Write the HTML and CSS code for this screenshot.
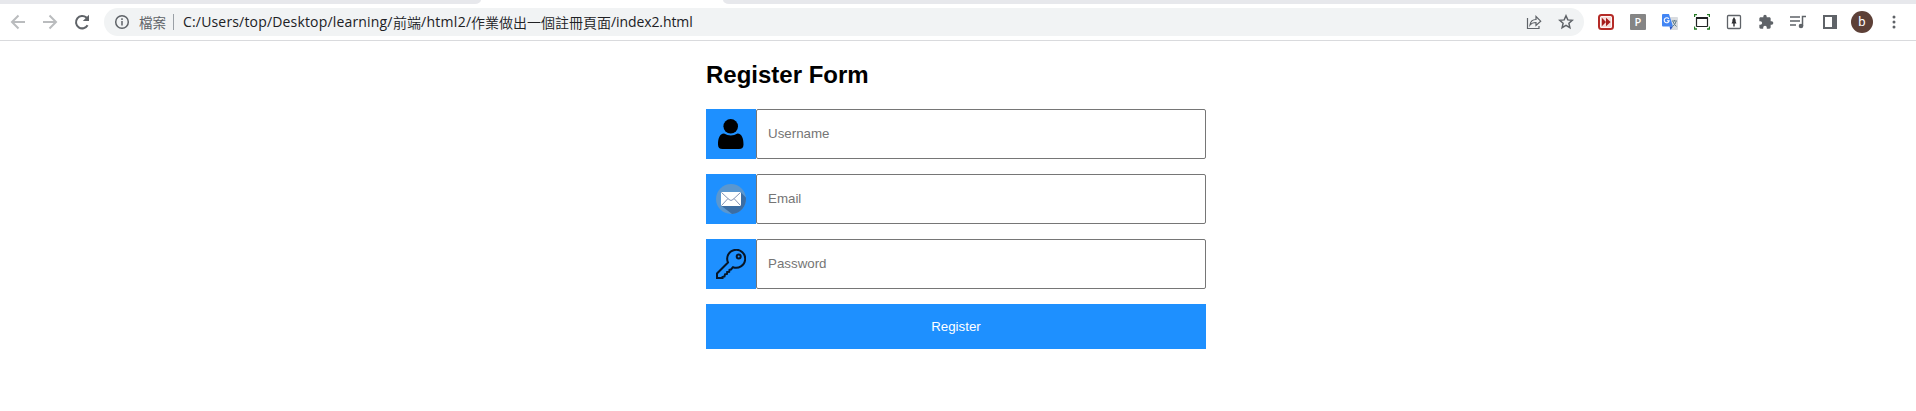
FILE: index.html
```html
<!DOCTYPE html>
<html lang="zh-Hant">
<head>
<meta charset="utf-8">
<title>Register Form</title>
<link rel="stylesheet" href="styles.css">
</head>
<body>
<div class="tabs"><div class="tab-left"></div><div class="tab-active"></div><div class="tab-right"></div></div>
<header class="toolbar">
  <nav class="nav">
    <svg class="dim" width="16" height="16" viewBox="0 0 16 16"><path d="M15 8H2.500M8.500 1.500 2 8l6.500 6.500"/></svg>
    <svg class="dim" width="16" height="16" viewBox="0 0 16 16"><path d="M1 8h12.500M7.500 1.500 14 8l-6.500 6.500"/></svg>
    <svg class="reload" width="16" height="16" viewBox="0 0 16 16"><path d="M13.600 11.200A6.200 6.200 0 1 1 12.400 3.600L14 5.200"/><path class="solid" d="M15 .8V7H8.800z"/></svg>
  </nav>
  <div class="omnibox">
    <svg class="info" width="16" height="16" viewBox="0 0 16 16"><circle cx="8" cy="8" r="6.300"/><path d="M8 7v4.500M8 4.300v1.700"/></svg>
    <span class="scheme">檔案</span>
    <span class="divider"></span>
    <span class="url"><span class="u1">C:/Users/top/Desktop/learning/</span><span class="han">前端</span><span class="u2">/html2/</span><span class="han">作業做出一個註冊頁面</span><span class="u3">/index2.html</span></span>
    <span class="actions">
      <svg width="16" height="16" viewBox="0 0 16 16"><path d="M1.500 4v10.500h11.500V12M4 11c.5-4 2.500-5.500 6-5.500V2.500l4.700 4.700L10 11.500v-3C7 8.500 5.500 9 4 11z"/></svg>
      <svg class="star" width="16" height="16" viewBox="0 0 16 16"><path d="m8 1.800 1.800 4.100 4.500.4-3.400 3 1 4.400L8 11.400l-3.900 2.300 1-4.400-3.400-3 4.500-.4z"/></svg>
    </span>
  </div>
  <div class="extensions">
    <svg width="16" height="16" viewBox="0 0 16 16"><rect x="1" y="1" width="14" height="14" rx="2.500" fill="#fff" stroke="#b52b27" stroke-width="2"/><rect x="2.800" y="2.800" width="10.400" height="10.400" rx="1" fill="#f6dcda"/><path d="M3.800 3.800 8 8l-4.200 4.200zM8 3.800 12.600 8 8 12.200z" fill="#a61c1c"/></svg>
    <span class="letter-p">P</span>
    <svg width="16" height="16" viewBox="0 0 16 16"><path d="M6 3h9q1 0 1 1v11q0 1-1 1H9z" fill="#d9dce0"/><path d="M1 0h6l4 12.500H1q-1 0-1-1V1q0-1 1-1z" fill="#4285f4"/><path d="M7.500 12.500H11L8.500 16z" fill="#2a56c6"/><path d="M6.800 4.900A2.500 2.500 0 1 0 7.200 6.700H4.900" fill="none" stroke="#fff" stroke-width="1.100"/><path d="M10 7h5M12.500 6v1M11 7.500q1 3 3.500 5M14 7.500q-.5 3-3.500 5" fill="none" stroke="#607d8b"/></svg>
    <svg width="16" height="16" viewBox="0 0 16 16"><rect x="2.500" y="3.500" width="11" height="9" rx=".5" fill="none" stroke="#202124" stroke-width="1.200"/><path d="M2 4h12" stroke="#202124" stroke-width="2"/><path d="M.5 3V.5H3M13 .5h2.500V3M.5 12.500v2.500H3M13 15h2.500V12.500" fill="none" stroke="#247a24" stroke-width="1.300"/></svg>
    <svg width="16" height="16" viewBox="0 0 16 16"><rect x="1.500" y="1.500" width="13" height="13" rx="1" fill="none" stroke="#5f6368" stroke-width="1.300"/><path d="M8 3 6 6.500h.7L5.500 9.500h1.800v3h1.400v-3h1.800L9.300 6.500h.7z" fill="#303134"/></svg>
    <svg width="16" height="16" viewBox="0 0 24 24"><path fill="#5f6368" d="M20.500 11H19V7c0-1.100-.9-2-2-2h-4V3.500a2.500 2.500 0 0 0-5 0V5H4c-1.100 0-2 .9-2 2v3.800h1.500a2.700 2.700 0 0 1 0 5.400H2V20c0 1.100.9 2 2 2h3.800v-1.500a2.700 2.700 0 0 1 5.400 0V22H17c1.100 0 2-.9 2-2v-4h1.500a2.500 2.500 0 0 0 0-5z"/></svg>
    <svg width="16" height="16" viewBox="0 0 16 16"><path d="M0 3h10M0 7h10M0 11h6M12.500 12V2.500H16" fill="none" stroke="#5f6368" stroke-width="1.500"/><circle cx="11" cy="12" r="2.300" fill="#5f6368"/></svg>
    <svg width="16" height="16" viewBox="0 0 16 16"><path d="M1 1h14v14H1zM3 3v10h7V3z" fill="#5f6368" fill-rule="evenodd"/></svg>
  </div>
  <span class="avatar">b</span>
  <svg class="menu" width="4" height="16" viewBox="0 0 4 16"><circle cx="2" cy="3" r="1.500"/><circle cx="2" cy="8" r="1.500"/><circle cx="2" cy="13" r="1.500"/></svg>
</header>
<form class="register">
  <h2 class="title">Register Form</h2>
  <div class="field">
    <span class="badge"><svg width="30" height="30" viewBox="0 0 30 30"><circle cx="14.700" cy="7.300" r="7.300"/><path d="M8 14.500q6.800 4 13.500 0c4.500.5 6 5 6 11q0 4.500-4.500 4.500H6.500Q2 30 2 25.500c0-6 1.500-10.500 6-11z"/></svg></span>
    <input class="input" type="text" placeholder="Username">
  </div>
  <div class="field">
    <span class="badge"><svg width="30" height="30" viewBox="0 0 30 30"><circle cx="15" cy="15" r="15" fill="#5b97cf"/><path d="M25 8.500 29.900 13.500A15 15 0 0 1 16 30L5 21.500z" fill="#3b6da3"/><rect x="5" y="8" width="20" height="14" rx="1" fill="#fff"/><path d="m5.500 8.500 7.500 7q2 2 4 0l7.500-7M5.500 21.500l6.500-7M24.500 21.500l-6.500-7" fill="none" stroke="#8293b5"/></svg></span>
    <input class="input" type="text" placeholder="Email">
  </div>
  <div class="field">
    <span class="badge"><svg width="30" height="30" viewBox="0 0 30 30"><g fill="none" stroke="#071526" stroke-width="2"><path d="M12 13.500A9 9 0 1 1 17 18.200L15 20.500l-1.500.3-.3 2-2 .2-.2 2-2 .3-.5 2.200-2 .5v1H1v-4.500z"/><circle cx="22.700" cy="7.500" r="2"/></g></svg></span>
    <input class="input" type="password" placeholder="Password">
  </div>
  <button class="submit" type="button">Register</button>
</form>
</body>
</html>
```
FILE: styles.css
```css
* { box-sizing: border-box; }
body { margin: 0; height: 411px; overflow: hidden; background: #fff; font-family: "Liberation Sans", Arial, sans-serif; }
svg { display: block; flex: none; }

.tabs { display: flex; height: 4px; background: #fff; }
.tab-left { width: 481px; background: #e7e8ec; border-bottom-right-radius: 6px 4px; }
.tab-active { width: 242px; }
.tab-right { flex: 1; background: #e7e8ec; border-bottom-left-radius: 6px 4px; }

.toolbar { display: flex; align-items: center; height: 37px; border-bottom: 1px solid #d9dadd; }
.nav { display: flex; gap: 16px; width: 104px; padding-left: 10px; fill: none; stroke: #5f6368; stroke-width: 2; }
.dim { stroke: #babcbe; }
.reload .solid { fill: #5f6368; stroke: none; }
.omnibox { display: flex; align-items: center; width: 1480px; height: 28px; padding: 0 10px; border-radius: 14px; background: #f1f3f4; }
.info { fill: none; stroke: #5f6368; stroke-width: 1.5; }
.scheme { width: 28px; margin-left: 9px; color: #5f6368; font: 400 13.5px/20px "Noto Sans CJK TC", sans-serif; }
.divider { width: 1px; height: 16px; margin: 0 9px 0 6px; background: #9aa0a6; }
.url { display: flex; color: #202124; font: 14px/20px "Open Sans", "Noto Sans", sans-serif; white-space: nowrap; }
.u1 { width: 210px; letter-spacing: 0.17px; }
.u2 { width: 50px; letter-spacing: 0.3px; }
.u3 { width: 84px; letter-spacing: -0.1px; }
.han { font-family: "Noto Sans CJK TC", sans-serif; font-weight: 350; }
.actions { display: flex; gap: 16px; margin-left: auto; fill: none; stroke: #5f6368; stroke-width: 1.2; }
.star { stroke-width: 1.5; }
.extensions { display: flex; gap: 16px; margin-left: 14px; }
.letter-p { width: 16px; height: 16px; border-radius: 1px; background: #858585; color: #fff; font: 600 11px/16px "Open Sans", sans-serif; text-align: center; }
.avatar { width: 22px; height: 22px; margin-left: 13px; border-radius: 50%; background: #5d4037; color: #fff; font: 13px/22px Roboto, sans-serif; text-align: center; }
.menu { margin-left: 19px; fill: #5f6368; }

.register { width: 500px; margin: 20px auto 0 706px; }
.title { margin: 0 0 20px; font-size: 24px; line-height: 28px; }
.field { display: flex; height: 50px; margin-bottom: 15px; }
.badge { display: grid; place-items: center; width: 50px; background: #1e90ff; }
.input { width: 450px; height: 50px; padding: 0 11px 2px; border: 1px solid #767676; border-radius: 2px; background: #fff; font: 13.333px "Liberation Sans", Arial, sans-serif; }
.input::placeholder { color: #757575; }
.submit { display: block; width: 500px; height: 45px; padding: 0; border: 0; background: #1e90ff; color: #fff; font: 13.333px "Liberation Sans", Arial, sans-serif; }
```
